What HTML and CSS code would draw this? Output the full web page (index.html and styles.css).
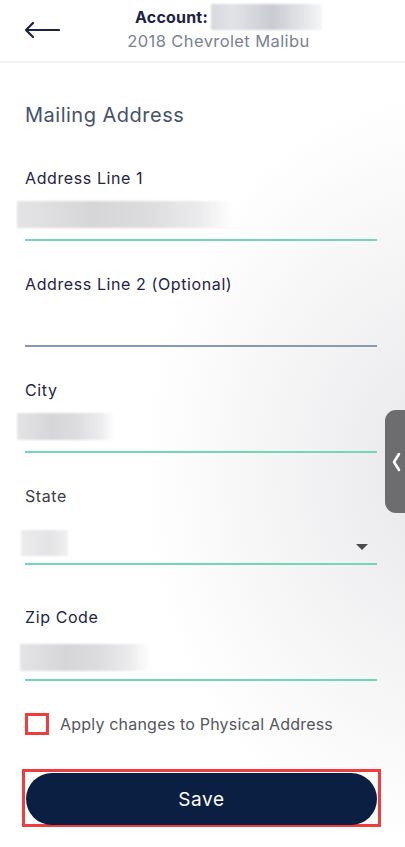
FILE: index.html
```html
<!DOCTYPE html>
<html>
<head>
<meta charset="utf-8">
<link rel="stylesheet" href="styles.css">
</head>
<body>
<div class="page">
  <header class="header">
    <div class="back">
      <svg width="36" height="16" viewBox="0 0 36 16"><path d="M35 8H2M9 1L2 8l7 7" fill="none" stroke="#1b2344" stroke-width="2.2" stroke-linecap="round" stroke-linejoin="round"/></svg>
    </div>
    <div class="titles">
      <div class="title-row"><span class="acct">Account:</span><span class="blur blur-acct"></span></div>
      <div class="sub">2018 Chevrolet Malibu</div>
    </div>
  </header>
  <main class="form">
    <h2 class="section">Mailing Address</h2>
    <div class="field">
      <div class="label">Address Line 1</div>
      <div class="input"><span class="blur blur-a1"></span></div>
      <div class="line green"></div>
    </div>
    <div class="field">
      <div class="label">Address Line 2 (Optional)</div>
      <div class="input"></div>
      <div class="line gray"></div>
    </div>
    <div class="field">
      <div class="label">City</div>
      <div class="input"><span class="blur blur-city"></span></div>
      <div class="line green"></div>
    </div>
    <div class="field field-state">
      <div class="label label-state">State</div>
      <div class="input input-state"><span class="blur blur-state"></span><span class="caret"></span></div>
      <div class="line green"></div>
    </div>
    <div class="field field-zip">
      <div class="label">Zip Code</div>
      <div class="input input-zip"><span class="blur blur-zip"></span></div>
      <div class="line green"></div>
    </div>
    <label class="check">
      <span class="box"></span>
      <span class="check-text">Apply changes to Physical Address</span>
    </label>
    <div class="save-outline">
      <button class="save">Save</button>
    </div>
  </main>
  <div class="side-tab">
    <svg width="10" height="20" viewBox="0 0 10 20"><path d="M8 2L3 10l5 8" fill="none" stroke="#fff" stroke-width="2.6" stroke-linecap="round" stroke-linejoin="round"/></svg>
  </div>
</div>
</body>
</html>
```
FILE: styles.css
```css
* { box-sizing: border-box; }
html, body { margin: 0; padding: 0; }
body {
  font-family: "Inter", "Open Sans", sans-serif;
  color: #1e2445;
  width: 405px;
  height: 847px;
  overflow: hidden;
}
.page {
  position: relative;
  width: 405px;
  height: 847px;
  background:
    radial-gradient(ellipse 300px 380px at 440px 470px, #e7e7e9 0%, rgba(238,238,240,0.75) 45%, rgba(255,255,255,0) 100%),
    #ffffff;
}
.header {
  height: 63px;
  display: flex;
  align-items: flex-start;
  border-bottom: 2px solid #f2f2f3;
  background: #fff;
}
.back {
  width: 127px;
  padding-left: 24px;
  padding-top: 22px;
}
.titles {
  display: flex;
  flex-direction: column;
  align-items: center;
  padding-top: 4px;
}
.title-row {
  display: flex;
  align-items: center;
  height: 26px;
}
.acct {
  font-weight: 700;
  font-size: 16px;
  letter-spacing: 0.2px;
  color: #1b2344;
  margin-left: 8px;
}
.blur {
  display: block;
  background: linear-gradient(90deg, #e4e4e6 0%, #d6d6d8 35%, #dcdcde 60%, #ececee 85%, rgba(255,255,255,0) 100%);
  filter: blur(1px);
}
.blur-acct {
  width: 111px;
  height: 26px;
  margin-left: 3px;
  background: linear-gradient(90deg, #d8d9de 0%, #e2e3e7 20%, #c9cbd2 55%, #e6e7ea 85%, #f6f6f7 100%);
}
.sub {
  font-size: 16.5px;
  letter-spacing: 0.4px;
  color: #7b8193;
  line-height: 22px;
  margin-right: 12px;
}
.form {
  padding: 40px 28px 0 25px;
}
.section {
  margin: 0;
  font-weight: 400;
  font-size: 20px;
  letter-spacing: 0.5px;
  line-height: 24px;
  color: #46516a;
}
.field { margin-top: 41px; }
.field + .field { margin-top: 33px; }
.label {
  font-size: 16px;
  letter-spacing: 0.6px;
  line-height: 20px;
  color: #1e2445;
}
.label-state { color: #3e4046; }
.input {
  position: relative;
  height: 51px;
}
.input-state { height: 57px; }
.input-zip { height: 52px; }
.field.field-zip { margin-top: 42px; }
.line { height: 2px; }
.line.green { background: #72d6ba; }
.line.gray { background: #8a9aae; }
.blur-a1 { position: absolute; left: -8px; top: 13px; width: 216px; height: 27px; }
.blur-city { position: absolute; left: -8px; top: 13px; width: 98px; height: 27px; }
.blur-state { position: absolute; left: -4px; top: 24px; width: 47px; height: 26px; background: linear-gradient(90deg, #ececee, #e3e3e5 60%, #f0f0f1); }
.blur-zip { position: absolute; left: -5px; top: 17px; width: 130px; height: 27px; }
.caret {
  position: absolute;
  right: 9px;
  top: 38px;
  width: 0;
  height: 0;
  border-left: 6px solid transparent;
  border-right: 6px solid transparent;
  border-top: 6px solid #4a4a4f;
}
.check {
  display: flex;
  align-items: center;
  margin-top: 32px;
  height: 22px;
}
.box {
  width: 24px;
  height: 22px;
  border: 3px solid #f03c3c;
  background: #fff;
}
.check-text {
  margin-left: 11px;
  font-size: 16px;
  letter-spacing: 0.2px;
  color: #54565c;
}
.save-outline {
  margin-top: 34px;
  margin-left: -3px;
  width: 359px;
  height: 58px;
  border: 3px solid #f03c3c;
  padding: 1px 1px 0 1px;
}
.save {
  display: block;
  width: 351px;
  height: 52px;
  border: none;
  border-radius: 26px;
  background: #0b1f42;
  color: #fff;
  font-family: inherit;
  font-size: 19px;
  letter-spacing: 0.6px;
  font-weight: 400;
  padding: 0;
}
.side-tab {
  position: absolute;
  right: 0;
  top: 410px;
  width: 20px;
  height: 103px;
  background: #6d6d70;
  border-radius: 11px 0 0 11px;
  display: flex;
  align-items: center;
  justify-content: center;
  padding-left: 2px;
}
```
